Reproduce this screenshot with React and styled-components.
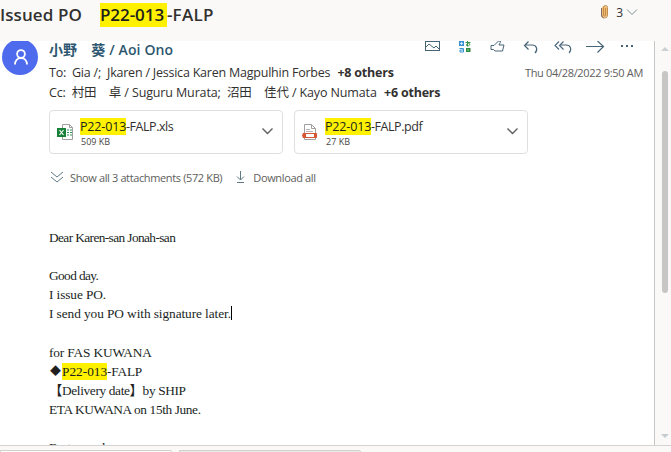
import React from "react";
import styled, { createGlobalStyle } from "styled-components";

const Global = createGlobalStyle`
  * { box-sizing: border-box; }
  body { margin: 0; overflow: hidden; background: #faf9f8; }
  svg { display: block; flex: none; fill: none; }
`;
const Page = styled.div`
  width: 671px; height: 452px; display: flex; flex-direction: column;
  overflow: hidden; color: #323130; background: #faf9f8;
  font-family: "Open Sans", "Noto Sans CJK JP", sans-serif;
`;
const Header = styled.header`
  height: 41px; flex: none; display: flex; align-items: flex-start;
  justify-content: space-between; padding-right: 33px;
`;
const Text = styled.span`
  white-space: pre; letter-spacing: ${(p) => p.$ls || 0}px;
  margin-left: ${(p) => p.$ml || 0}px;
`;
const Mark = styled.mark`
  background: #fff100; color: #201f1e; letter-spacing: ${(p) => p.$ls || 0}px;
  display: inline-block; width: ${(p) => p.$w}px; height: ${(p) => p.$h}px;
  line-height: ${(p) => p.$h}px; margin-top: ${(p) => p.$mt || 0}px; white-space: pre;
`;
const Subject = styled.h1`
  margin: 0; padding-top: 3px; display: flex; font-size: 17px; font-weight: 600; line-height: 24px;
`;
const Count = styled.div`
  display: flex; align-items: center; height: 24px; font-size: 12px;
`;
const Middle = styled.div` display: flex; height: 404px; flex: none; `;
const Message = styled.main`
  width: 655px; height: 404px; overflow: hidden; display: flex; background: #fff;
  border-right: 1px solid #c8c6c4;
`;
const Side = styled.div` width: 49px; flex: none; `;
const Avatar = styled.div`
  width: 36px; height: 36px; margin: -2px 0 0 2px; border-radius: 50%; background: #4f6bed;
  display: grid; place-items: center;
`;
const Column = styled.div` flex: 1; min-width: 0; padding-right: 11px; `;
const Top = styled.div` display: flex; justify-content: space-between; height: 22px; `;
const Sender = styled.div`
  font-size: 14px; line-height: 18px; font-weight: 600; color: #2d5770; white-space: pre; letter-spacing: 0.12px;
`;
const Actions = styled.div` display: flex; align-items: flex-start; padding-right: 9px; `;
const Recipients = styled.div`
  height: 20px; line-height: 20px; display: flex; font-size: 12.5px;
`;
const Others = styled(Text)` font-weight: 700; `;
const Stamp = styled.time`
  margin-left: auto; white-space: pre; font-size: 11px; color: #605e5c; letter-spacing: -0.32px;
`;
const Cards = styled.div` display: flex; gap: 11px; margin-top: 7px; `;
const Card = styled.div`
  width: 234px; height: 44px; border: 1px solid #e1dfdd; border-radius: 4px;
  display: flex; padding: 7px 8px 0 7px;
`;
const CardText = styled.div` margin-left: 6px; flex: 1; `;
const FileName = styled.div` display: flex; font-size: 12.5px; line-height: 18px; height: 17px; `;
const Size = styled.div` font-size: 9px; line-height: 14px; padding-left: 1px; color: #484644; `;
const Links = styled.div`
  display: flex; align-items: center; height: 18px; margin-top: 14px; font-size: 11px; color: #605e5c;
`;
const Body = styled.div`
  margin-top: 42px; color: #201f1e; font-family: "Liberation Serif", "Noto Sans CJK JP", serif; font-size: 13.33px;
`;
const Line = styled.div`
  height: 19.1px; line-height: 19px; white-space: pre; display: flex; letter-spacing: ${(p) => p.$ls || 0}px;
`;
const Diamond = styled.span` width: 13px; padding-left: 1px; font-size: 11px; `;
const Caret = styled.i` width: 1px; height: 14px; margin-top: 2px; background: #000; `;
const Scroll = styled.div`
  flex: 1; display: flex; flex-direction: column; align-items: center; padding: 6px 0 7px 3px;
`;
const Thumb = styled.div`
  width: 6px; height: 222px; margin: 20px 0 auto; border-radius: 3px; background: #c8c6c4;
`;
const Bottom = styled.footer`
  height: 7px; border-top: 1px solid #d5d3d1; display: flex; gap: 7px; padding-top: 4px; background: #faf9f8;
`;
const Tab = styled.div`
  width: ${(p) => p.$w}px; height: 8px; border: 1px solid #d2d0ce; border-radius: 0 2px 0 0;
  background: ${(p) => p.$bg};
`;
const Glyph = styled.svg` margin-left: ${(p) => p.$ml || 0}px; margin-top: ${(p) => p.$mt || 0}px; `;

function Icon({ w, h, ml, mt, d, color = "#476477", sw = 1, children }) {
  return (
    <Glyph width={w} height={h} viewBox={`0 0 ${w} ${h}`} $ml={ml} $mt={mt} stroke={color} strokeWidth={sw}>
      {d && <path d={d} />}
      {children}
    </Glyph>
  );
}

const Excel = () => (
  <Icon w={17} h={18} mt={5}>
    <path d="M5.5 5V1.5h7l3 3v12h-10v-3M12.5 1.5v3h3" stroke="#a19f9d" />
    <path d="M0 5h9v9H0z" fill="#188038" stroke="none" />
    <path d="M2.5 7l4 5M6.5 7l-4 5" stroke="#fff" strokeWidth="1.2" />
    <path d="M10 7h2m1 0h2M10 9.5h2m1 0h2M10 12h2m1 0h2" stroke="#35915a" />
  </Icon>
);
const Pdf = () => (
  <Icon w={17} h={18} mt={5}>
    <path d="M2.5 11V1.5h7l4 4V11M9.5 1.5v4h4M2.5 14v2.5h11V14" stroke="#a19f9d" />
    <path d="M4 6.5h4M4 8.5h7" stroke="#b8b6b4" />
    <path d="M1.5 10.5h13v4h-13z" stroke="#d65532" fill="#fff" />
    <path d="M1 10h3v5H1l-1-2.5zM12 10h2l1 2.5-1 2.5h-2z" fill="#d65532" stroke="none" />
  </Icon>
);

function Attachment({ icon, name, size }) {
  return (
    <Card>
      {icon}
      <CardText>
        <FileName><Mark $w={46} $h={17} $ls={-0.15}>P22-013</Mark><Text $ls={-0.45}>{name}</Text></FileName>
        <Size>{size}</Size>
      </CardText>
      <Icon w={13} h={8} mt={9} d="M1.5 1.5l5 5 5-5" color="#605e5c" sw={1.4} />
    </Card>
  );
}

export default function App() {
  return (
    <Page>
      <Global />
      <Header>
        <Subject>
          <Text $ls={0.08}>Issued PO</Text><Text $ml={18} /><Mark $w={67} $h={24} $ls={-0.05}>P22-013</Mark><Text $ls={0.25}>-FALP</Text>
        </Subject>
        <Count>
          <Icon w={9} h={16} color="#c18a4b">
            <rect x="2" y="2" width="5" height="11" rx="2" fill="#f0bd73" stroke="none" />
            <path d="M1.5 4v7a3 3 0 0 0 6 0V3.5a2 2 0 0 0-4 0V11a1 1 0 0 0 2 0V4" />
            <path d="M1.5 4v7a3 3 0 0 0 2 2.8" stroke="#806b65" />
          </Icon>
          <Text $ml={7}>3</Text>
          <Icon w={12} h={8} ml={3} mt={-1} d="M1 1.5l5 5 5-5" color="#7e9096" />
        </Count>
      </Header>
      <Middle>
        <Message>
          <Side>
            <Avatar>
              <Icon w={18} h={20} mt={-1} ml={1} color="#fff" sw={1.8}>
                <circle cx="9" cy="7" r="3.9" /><path d="M3 17.5c0-4 2.5-6.5 6-6.5s6 2.5 6 6.5" />
              </Icon>
            </Avatar>
          </Side>
          <Column>
            <Top>
              <Sender>小野　葵 / Aoi Ono</Sender>
              <Actions>
                <Icon w={16} h={12}><rect x=".5" y=".5" width="14" height="9" /><path d="M1 6l3-3 5 4 2-2 4 4" /></Icon>
                <Icon w={12} h={12} ml={18}>
                  <path d="M0 0h5v5H0z" fill="#3692d4" stroke="none" /><path d="M1 2.5h3M2.5 1v3" stroke="#cfe6f6" />
                  <path d="M6.5 1.5h5M8.5 0v5M10.5 2c-3 0-4 3-2 3s3-2 1.5-2.5" stroke="#349344" />
                  <path d="M.5 7.5h4V11H1V9h3" stroke="#3692d4" />
                  <path d="M7 7h4.5v4H7z" fill="#2f8b3e" stroke="none" /><path d="M8 9h2" stroke="#9bc9a2" />
                </Icon>
                <Icon w={16} h={12} ml={19} d="M1 4.5h3L8.5 0h1.8v1.5L9 4h5l-1.5 6H5L3.5 8.5H1z" />
                <Icon w={16} h={14} ml={17} d="M5.5 .5l-4 4 4 4M2 4h7c5 0 6 5 3 8" sw={1.2} />
                <Icon w={19} h={14} ml={15} d="M5 .5l-4 4 4 4M9.5 .5l-4 4 4 4M6 4h6c5 0 6 5 3 8" sw={1.1} />
                <Icon w={19} h={13} ml={13} d="M0 5.5h17.5M11.5 0l6 5.5-6 6" sw={1.2} />
                <Icon w={13} h={8} ml={16} mt={3}>
                  <path d="M0 1h2v2H0zM5 1h2v2H5zM10 1h2v2h-2z" fill="#476477" stroke="none" />
                </Icon>
              </Actions>
            </Top>
            <Recipients>
              <Text $ls={-0.24}>To:</Text><Text $ml={6} $ls={-0.22}>Gia /;  Jkaren / Jessica Karen Magpulhin Forbes  </Text><Others $ml={1} $ls={-0.2}>+8 others</Others>
              <Stamp>Thu 04/28/2022 9:50 AM</Stamp>
            </Recipients>
            <Recipients>
              <Text $ls={-0.14}>Cc:</Text><Text $ml={6} $ls={-0.13}>村田　卓 / Suguru Murata;  沼田　佳代 / Kayo Numata  </Text><Others $ml={1} $ls={-0.2}>+6 others</Others>
            </Recipients>
            <Cards>
              <Attachment icon={<Excel />} name="-FALP.xls" size="509 KB" />
              <Attachment icon={<Pdf />} name="-FALP.pdf" size="27 KB" />
            </Cards>
            <Links>
              <Icon w={14} h={12} ml={1} d="M1 1l6 5 6-5M1 6l6 5 6-5" color="#5f7a85" />
              <Text $ml={6} $ls={-0.37}>Show all 3 attachments (572 KB)</Text>
              <Icon w={9} h={12} ml={14} d="M4.5 0v9M1 5.5L4.5 9 8 5.5M1 11.5h7" color="#5f7a85" />
              <Text $ml={8} $ls={-0.35}>Download all</Text>
            </Links>
            <Body>
              <Line $ls={-0.6}>Dear Karen-san Jonah-san</Line>
              <Line />
              <Line $ls={-0.6}>Good day.</Line>
              <Line $ls={-0.1}>I issue PO.</Line>
              <Line $ls={-0.08}>I send you PO with signature later.<Caret /></Line>
              <Line />
              <Line $ls={-0.15}>for FAS KUWANA</Line>
              <Line><Diamond>◆</Diamond><Mark $w={45} $h={17} $mt={1}>P22-013</Mark><Text $ls={-0.2}>-FALP</Text></Line>
              <Line $ls={-0.35}>【Delivery date】by SHIP</Line>
              <Line $ls={-0.38}>ETA KUWANA on 15th June.</Line>
              <Line />
              <Line $ls={-0.5}>Best regards,</Line>
            </Body>
          </Column>
        </Message>
        <Scroll>
          <Icon w={8} h={4}><path d="M0 4L4 0l4 4z" fill="#cbd0d2" stroke="none" /></Icon>
          <Thumb />
          <Icon w={8} h={4}><path d="M0 0h8L4 4z" fill="#c4cccf" stroke="none" /></Icon>
        </Scroll>
      </Middle>
      <Bottom><Tab $w={172} $bg="#fff" /><Tab $w={182} $bg="#edebe9" /></Bottom>
    </Page>
  );
}
